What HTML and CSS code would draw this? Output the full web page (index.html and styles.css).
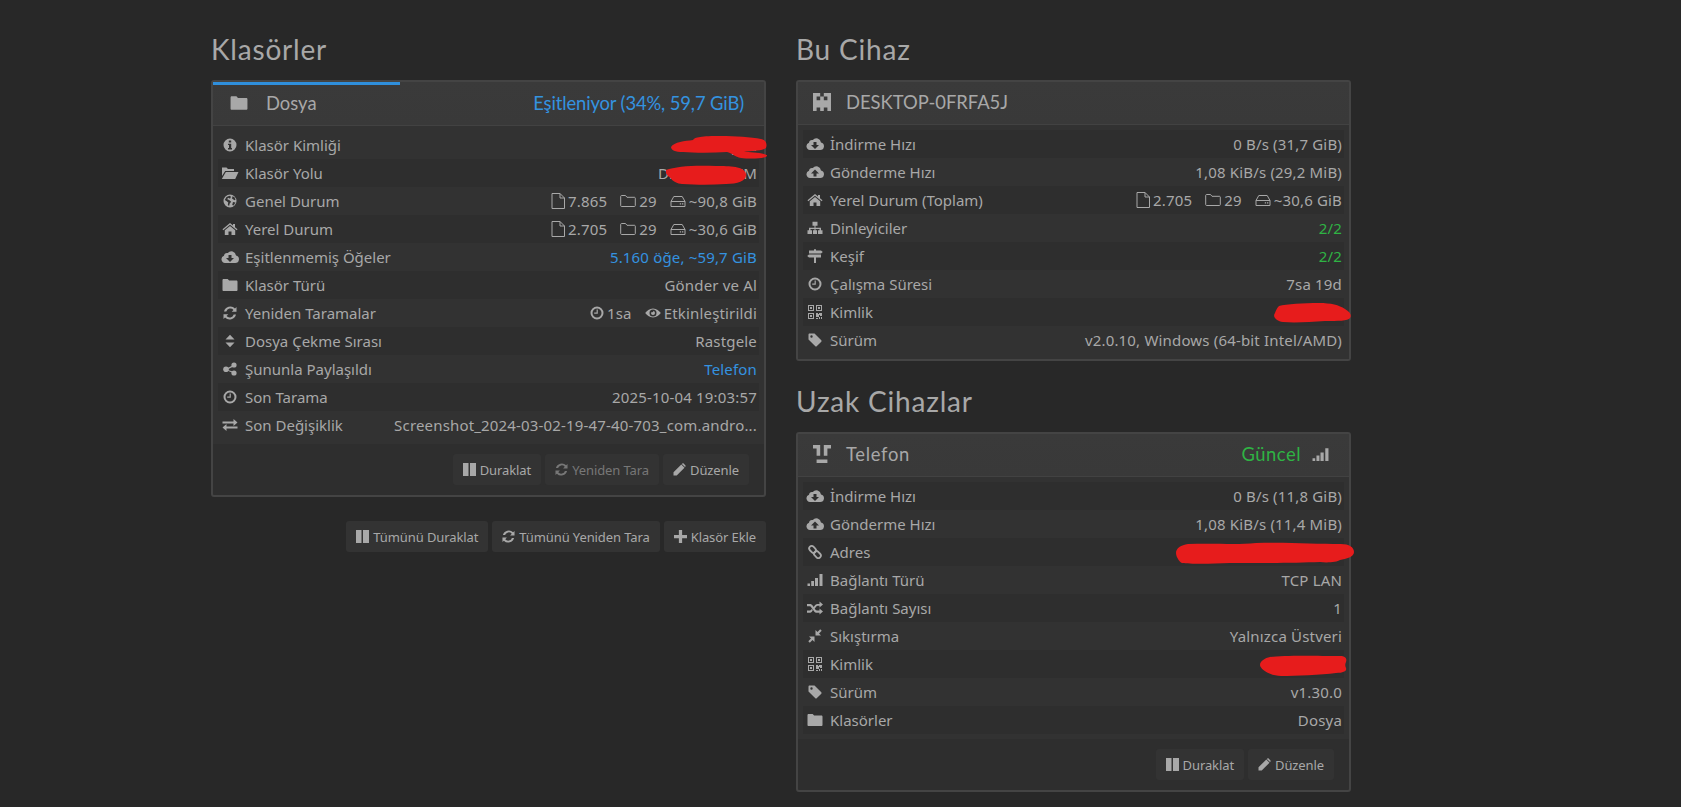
FILE: index.html
```html
<!DOCTYPE html>
<html lang="tr">
<head>
<meta charset="utf-8">
<title>Syncthing</title>
<link rel="stylesheet" href="styles.css">
</head>
<body>
<svg class="defs" width="0" height="0" aria-hidden="true">
  <symbol id="i-folder" viewBox="0 0 16 14"><path d="M1.500 1h4.200l1.400 1.600h7.400c.5 0 1 .5 1 1V12c0 .6-.5 1-1 1h-13c-.5 0-1-.4-1-1V2c0-.5.5-1 1-1z"/></symbol>
  <symbol id="i-open" viewBox="0 0 18 14"><path d="M1 1.500h4.500L7 3h6v2H4.200L1 10z"/><path d="M4.800 6H17.500l-3.300 7H0.800z"/></symbol>
  <symbol id="i-info" viewBox="0 0 14 14"><path fill-rule="evenodd" d="M7 .5a6.500 6.500 0 1 1 0 13 6.500 6.500 0 0 1 0-13zM5.800 2.500v2h2.400v-2zM5 5.700v1.300h1v3H5v1.400h4V10H8.200V5.700z"/></symbol>
  <symbol id="i-globe" viewBox="0 0 14 14"><path fill-rule="evenodd" d="M7 .5a6.500 6.500 0 1 1 0 13 6.500 6.500 0 0 1 0-13zM3.500 3 1.800 6l2 1.200 1.500 1.300-.5 2 1.200 1.700.7-2.700 1.500-1.700-1.700-1.500L4 5l1.500-1.200L7 4.800l1-2-1.500-1zM9.500 2.300 9 4.500l2.500 1.800 1-.5-1-2.500zM10 8l-.8 3 1.500.5 1.800-3z"/></symbol>
  <symbol id="i-home" viewBox="0 0 16 14"><path d="M8 1 .5 7.300l.8 1L8 2.800l6.700 5.500.8-1L13 5.200V2h-2v1.500z"/><path d="M8 4 2.800 8.300V13H6.500V9.500h3V13h3.700V8.300z"/></symbol>
  <symbol id="i-cdown" viewBox="0 0 18 14"><path fill-rule="evenodd" d="M4 13a3.700 3.700 0 0 1-1-7.200A3.300 3.300 0 0 1 6.800 3 4.700 4.700 0 0 1 15 5.500 3.800 3.800 0 0 1 14 13zM7.500 5v3H5l4 4 4-4h-2.500V5z"/></symbol>
  <symbol id="i-cup" viewBox="0 0 18 14"><path fill-rule="evenodd" d="M4 13a3.700 3.700 0 0 1-1-7.200A3.300 3.300 0 0 1 6.800 3 4.700 4.700 0 0 1 15 5.500 3.800 3.800 0 0 1 14 13zM9 4.500l-4 4h2.500v3h3v-3H13z"/></symbol>
  <symbol id="i-refresh" viewBox="0 0 14 14"><path d="M13.500 1v4.800H8.700l1.800-1.800A4.200 4.200 0 0 0 3.300 5.500H1A6.500 6.500 0 0 1 12 2.500z"/><path d="M.5 13V8.200h4.800L3.500 10a4.200 4.200 0 0 0 7.200-1.500H13A6.500 6.500 0 0 1 2 11.500z"/></symbol>
  <symbol id="i-sort" viewBox="0 0 10 14"><path d="M5 .8 9.500 5.500H.5zM5 13.200.5 8.500h9z"/></symbol>
  <symbol id="i-share" viewBox="0 0 14 14"><path d="M2.800 7 10.800 2.800l.6 1.300L4 7.800 11.400 10l-.6 1.300L2.800 8z"/><circle cx="3" cy="7.300" r="2.800"/><circle cx="11" cy="3" r="2.600"/><circle cx="11" cy="11" r="2.600"/></symbol>
  <symbol id="i-clock" viewBox="0 0 14 14"><path fill-rule="evenodd" d="M7 .5a6.500 6.500 0 1 1 0 13 6.500 6.500 0 0 1 0-13zm0 2a4.500 4.500 0 1 0 0 9 4.500 4.500 0 0 0 0-9zM7.800 3.500v4.200H4.200V6.500h2.400v-3z"/></symbol>
  <symbol id="i-exchange" viewBox="0 0 17 14"><path d="M1 3.500h11V1l4 3.500L12 8V5.500H1zM16 8.500H5V6L1 9.500 5 13v-2.500h11z"/></symbol>
  <symbol id="i-file" viewBox="0 0 14 16"><path class="ln" d="M1 .5h8L13.500 5v10.500H1zM9 .5V5h4.500"/></symbol>
  <symbol id="i-folder-o" viewBox="0 0 16 14"><path class="ln" d="M1.500 1.500h4l1.500 1.800h7.500c.4 0 .8.400.8.800v7.600c0 .4-.4.800-.8.800h-13c-.4 0-.8-.4-.8-.8V2.300c0-.4.400-.8.800-.8z"/></symbol>
  <symbol id="i-hdd" viewBox="0 0 16 14"><path class="ln" d="M3.800 2.500h8.400L15 7.500v5H1v-5zM1 7.500h14"/><path d="M9.800 9.300h1.300v1.300H9.800zM12 9.300h1.300v1.300H12z"/></symbol>
  <symbol id="i-eye" viewBox="0 0 16 14"><path fill-rule="evenodd" d="M8 2.500C11.500 2.500 14.300 5 15.800 7 14.300 9 11.500 11.500 8 11.500S1.700 9 .2 7C1.700 5 4.500 2.500 8 2.500zm0 1a3.500 3.500 0 1 0 0 7 3.500 3.500 0 0 0 0-7zM8 5a2 2 0 1 1-2 2c0-.4.100-.7.300-1 .2.400.5.500.9.500.6 0 1-.4 1-.9 0-.3-.1-.5-.2-.6z"/></symbol>
  <symbol id="i-sitemap" viewBox="0 0 17 14"><path d="M6 .8h5v4H9v2h5.500v2.400H16V13h-4.500V9.200H13V8H9v1.200h1.500V13h-4V9.200H8V8H4v1.200h1.500V13H1V9.200h1.500V6.800H8v-2H6z"/></symbol>
  <symbol id="i-signs" viewBox="0 0 16 14"><path d="M7 .3h2v1.200h5l1.800 1.500L14 4.500H2V1.500h5zM2 5.500h12v3H9V14H7V8.500H2L.2 7z"/></symbol>
  <symbol id="i-qr" viewBox="0 0 14 14"><path fill-rule="evenodd" d="M0 0h6v6H0zM1 1v4h4V1zM2 2h2v2H2zM8 0h6v6H8zM9 1v4h4V1zM10 2h2v2h-2zM0 8h6v6H0zM1 9v4h4V9zM2 10h2v2H2zM8 8h2v1h1V8h3v3h-2v-1h-1v2H8zM8 13h2v1H8zM11 12h1v2h-1zM13 12h1v2h-1z"/></symbol>
  <symbol id="i-tag" viewBox="0 0 14 14"><path fill-rule="evenodd" d="M.5 1.500c0-.5.500-1 1-1h5L13.300 7.300c.4.400.4 1 0 1.400l-4.600 4.600c-.4.400-1 .4-1.400 0L.5 6.500zM3.500 2.300a1.200 1.200 0 1 0 0 2.400 1.200 1.200 0 0 0 0-2.400z"/></symbol>
  <symbol id="i-link" viewBox="0 0 14 14"><rect class="lnb" x=".8" y="1.900" width="7.600" height="5" rx="2.500" transform="rotate(45 4.600 4.400)"/><rect class="lnb" x="5.600" y="7.100" width="7.600" height="5" rx="2.500" transform="rotate(45 9.400 9.600)"/></symbol>
  <symbol id="i-signal" viewBox="0 0 16 14"><path d="M.5 10.500h2.500V13H.500zM4.200 8H7v5H4.200zM8 5h3v8H8zM12.500 1h3v12h-3z"/></symbol>
  <symbol id="i-random" viewBox="0 0 17 14"><path d="M13 .5l3.500 3-3.500 3V4.800h-1.800c-.6 0-1 .3-1.400.8L7.800 8.200l-.9-1.900 1.400-1.800c.8-1 1.700-1.500 2.900-1.500H13zM.5 3h2.800c1.300 0 2.300.6 3 1.700L9 8.800c.4.500.9.800 1.500.8H13V7.500l3.500 3-3.500 3v-1.800h-2.500c-1.300 0-2.300-.5-3-1.500L4.800 6.400c-.4-.7-.9-1.100-1.500-1.100H.5zM.5 9.500h2.800c.6 0 1-.2 1.400-.8l.7-1 .9 1.800-.6.800c-.7 1-1.700 1.500-2.900 1.500H.5z"/></symbol>
  <symbol id="i-compress" viewBox="0 0 14 14"><path d="M7.500 1v5.500H13l-2-2 2.700-2.700L12.200.3 9.500 3zM6.500 7.500H1l2 2-2.700 2.700 1.500 1.500L4.500 11l2 2z"/></symbol>
  <symbol id="i-pause" viewBox="0 0 13 13"><path d="M0 0h5.500v13H0zM7 0h6v13H7z"/></symbol>
  <symbol id="i-pencil" viewBox="0 0 13 13"><path d="M.5 9.300 8.300 1.500l3.200 3.200-7.800 7.800H.5zM9.200.7c.5-.5 1.200-.5 1.600 0l1.500 1.500c.5.500.5 1.100 0 1.600l-.3.300L8.800 1z"/></symbol>
  <symbol id="i-plus" viewBox="0 0 12 12"><path d="M4.500 0h3v4.500H12v3H7.500V12h-3V7.500H0v-3h4.500z"/></symbol>
  <symbol id="i-id1" viewBox="0 0 18 18"><path d="M0 0h7.200v3.600H0zM10.800 0H18v3.600h-7.200zM0 3.600h3.600v3.600H0zM7.200 3.600h3.600v3.600H7.200zM14.400 3.600H18v3.600h-3.600zM0 7.200h18v7.200H0zM0 14.400h3.600V18H0zM7.200 14.400h3.600V18H7.200zM14.400 14.400H18V18h-3.600z"/></symbol>
  <symbol id="i-id2" viewBox="0 0 18 18"><path d="M0 0h7.200v3.600H0zM10.800 0H18v3.600h-7.200zM3.600 3.600h3.600v7.200H3.600zM10.800 3.600h3.600v7.200h-3.600zM3.600 14.400h10.800V18H3.600z"/></symbol>
</svg>

<main class="layout">
  <section class="col">
    <h3 class="section-title">Klasörler</h3>
    <article class="panel panel-progress">
      <div class="progress"></div>
      <header class="panel-head">
        <svg class="head-icon head-folder"><use href="#i-folder"/></svg>
        <span class="head-name">Dosya</span>
        <span class="head-status blue">Eşitleniyor (34%, 59,7 GiB)</span>
      </header>
      <div class="panel-body even-stripes">
        <div class="row"><span class="lbl"><svg class="ic"><use href="#i-info"/></svg>Klasör Kimliği</span><span class="val">aaaa-xyaa<svg class="scribble s1" viewBox="0 0 96 23"><path d="M0 11C3 6 14 5 22 4 24 1 30 0 50 0c14 0 30 1 40 3 6 1 6 6 5 9-4 3-14 3-22 4 6 0 24 1 23 4-2 3-18 3-26 2-6-1-9-5-14-6-15 1-32 1-44 0C4 16 0 14 0 11z"/></svg></span></div>
        <div class="row"><span class="lbl"><svg class="ic"><use href="#i-open"/></svg>Klasör Yolu</span><span class="val">D:\Xxxxxx\XM<svg class="scribble s2" viewBox="0 0 82 20"><path d="M0 5C10 1 30 0 50 1c14 0 28 0 30 8 1 7-8 10-20 10-15 1-28 1-44 0C6 18 6 13 2 11 0 9-1 7 0 5z"/></svg></span></div>
        <div class="row"><span class="lbl"><svg class="ic"><use href="#i-globe"/></svg>Genel Durum</span><span class="val stats"><span><svg class="st st-file"><use href="#i-file"/></svg>7.865</span><span><svg class="st"><use href="#i-folder-o"/></svg>29</span><span><svg class="st"><use href="#i-hdd"/></svg>~90,8 GiB</span></span></div>
        <div class="row"><span class="lbl"><svg class="ic"><use href="#i-home"/></svg>Yerel Durum</span><span class="val stats"><span><svg class="st st-file"><use href="#i-file"/></svg>2.705</span><span><svg class="st"><use href="#i-folder-o"/></svg>29</span><span><svg class="st"><use href="#i-hdd"/></svg>~30,6 GiB</span></span></div>
        <div class="row"><span class="lbl"><svg class="ic"><use href="#i-cdown"/></svg>Eşitlenmemiş Öğeler</span><span class="val blue">5.160 öğe, ~59,7 GiB</span></div>
        <div class="row"><span class="lbl"><svg class="ic"><use href="#i-folder"/></svg>Klasör Türü</span><span class="val">Gönder ve Al</span></div>
        <div class="row"><span class="lbl"><svg class="ic"><use href="#i-refresh"/></svg>Yeniden Taramalar</span><span class="val stats"><span><svg class="st st-sm"><use href="#i-clock"/></svg>1sa</span><span><svg class="st"><use href="#i-eye"/></svg>Etkinleştirildi</span></span></div>
        <div class="row"><span class="lbl"><svg class="ic"><use href="#i-sort"/></svg>Dosya Çekme Sırası</span><span class="val">Rastgele</span></div>
        <div class="row"><span class="lbl"><svg class="ic"><use href="#i-share"/></svg>Şununla Paylaşıldı</span><span class="val blue">Telefon</span></div>
        <div class="row"><span class="lbl"><svg class="ic"><use href="#i-clock"/></svg>Son Tarama</span><span class="val">2025-10-04 19:03:57</span></div>
        <div class="row"><span class="lbl"><svg class="ic"><use href="#i-exchange"/></svg>Son Değişiklik</span><span class="val">Screenshot_2024-03-02-19-47-40-703_com.andro...</span></div>
      </div>
      <footer class="panel-foot">
        <span class="btn"><svg class="bi"><use href="#i-pause"/></svg>Duraklat</span>
        <span class="btn btn-off"><svg class="bi"><use href="#i-refresh"/></svg>Yeniden Tara</span>
        <span class="btn"><svg class="bi"><use href="#i-pencil"/></svg>Düzenle</span>
      </footer>
    </article>
    <div class="global-actions">
      <span class="btn"><svg class="bi"><use href="#i-pause"/></svg>Tümünü Duraklat</span>
      <span class="btn"><svg class="bi"><use href="#i-refresh"/></svg>Tümünü Yeniden Tara</span>
      <span class="btn"><svg class="bi"><use href="#i-plus"/></svg>Klasör Ekle</span>
    </div>
  </section>

  <section class="col">
    <h3 class="section-title">Bu Cihaz</h3>
    <article class="panel">
      <header class="panel-head">
        <svg class="head-icon"><use href="#i-id1"/></svg>
        <span class="head-name">DESKTOP-0FRFA5J</span>
      </header>
      <div class="panel-body odd-stripes">
        <div class="row"><span class="lbl"><svg class="ic"><use href="#i-cdown"/></svg>İndirme Hızı</span><span class="val">0 B/s (31,7 GiB)</span></div>
        <div class="row"><span class="lbl"><svg class="ic"><use href="#i-cup"/></svg>Gönderme Hızı</span><span class="val">1,08 KiB/s (29,2 MiB)</span></div>
        <div class="row"><span class="lbl"><svg class="ic"><use href="#i-home"/></svg>Yerel Durum (Toplam)</span><span class="val stats"><span><svg class="st st-file"><use href="#i-file"/></svg>2.705</span><span><svg class="st"><use href="#i-folder-o"/></svg>29</span><span><svg class="st"><use href="#i-hdd"/></svg>~30,6 GiB</span></span></div>
        <div class="row"><span class="lbl"><svg class="ic"><use href="#i-sitemap"/></svg>Dinleyiciler</span><span class="val green">2/2</span></div>
        <div class="row"><span class="lbl"><svg class="ic"><use href="#i-signs"/></svg>Keşif</span><span class="val green">2/2</span></div>
        <div class="row"><span class="lbl"><svg class="ic"><use href="#i-clock"/></svg>Çalışma Süresi</span><span class="val">7sa 19d</span></div>
        <div class="row"><span class="lbl"><svg class="ic ic-qr"><use href="#i-qr"/></svg>Kimlik</span><span class="val"><svg class="scribble s3" viewBox="0 0 77 20"><path d="M5 3C12 1 30 0 45 0c12 0 20 2 26 6 5 3 7 6 5 9-2 3-12 3-25 3-15 1-30 2-42 1C3 18-2 14 1 10c1-3 2-5 4-7z"/></svg></span></div>
        <div class="row"><span class="lbl"><svg class="ic"><use href="#i-tag"/></svg>Sürüm</span><span class="val">v2.0.10, Windows (64-bit Intel/AMD)</span></div>
      </div>
    </article>

    <h3 class="section-title section-next">Uzak Cihazlar</h3>
    <article class="panel">
      <header class="panel-head">
        <svg class="head-icon"><use href="#i-id2"/></svg>
        <span class="head-name head-name-wide">Telefon</span>
        <span class="head-status green">Güncel<svg class="head-signal"><use href="#i-signal"/></svg></span>
      </header>
      <div class="panel-body odd-stripes">
        <div class="row"><span class="lbl"><svg class="ic"><use href="#i-cdown"/></svg>İndirme Hızı</span><span class="val">0 B/s (11,8 GiB)</span></div>
        <div class="row"><span class="lbl"><svg class="ic"><use href="#i-cup"/></svg>Gönderme Hızı</span><span class="val">1,08 KiB/s (11,4 MiB)</span></div>
        <div class="row"><span class="lbl"><svg class="ic"><use href="#i-link"/></svg>Adres</span><span class="val"><svg class="scribble s4" viewBox="0 0 178 23"><path d="M12 3C40 2 60 4 80 2c30-1 60 1 85 1 8 0 13 3 13 8 0 5-8 7-14 8-3 2-12 3-20 2-25 1-60 1-90 1-20 1-40 1-48 0C5 22 0 17 0 12 0 7 5 4 12 3z"/></svg></span></div>
        <div class="row"><span class="lbl"><svg class="ic"><use href="#i-signal"/></svg>Bağlantı Türü</span><span class="val">TCP LAN</span></div>
        <div class="row"><span class="lbl"><svg class="ic"><use href="#i-random"/></svg>Bağlantı Sayısı</span><span class="val">1</span></div>
        <div class="row"><span class="lbl"><svg class="ic"><use href="#i-compress"/></svg>Sıkıştırma</span><span class="val">Yalnızca Üstveri</span></div>
        <div class="row"><span class="lbl"><svg class="ic ic-qr"><use href="#i-qr"/></svg>Kimlik</span><span class="val"><svg class="scribble s5" viewBox="0 0 87 22"><path d="M10 2C25 0 60 1 80 1c6 0 7 3 6 6-1 2-1 4 0 6 1 3-2 5-10 5-15 2-40 3-55 3C10 21 0 14 0 10 0 6 5 3 10 2z"/></svg></span></div>
        <div class="row"><span class="lbl"><svg class="ic"><use href="#i-tag"/></svg>Sürüm</span><span class="val">v1.30.0</span></div>
        <div class="row"><span class="lbl"><svg class="ic"><use href="#i-folder"/></svg>Klasörler</span><span class="val">Dosya</span></div>
      </div>
      <footer class="panel-foot">
        <span class="btn"><svg class="bi"><use href="#i-pause"/></svg>Duraklat</span>
        <span class="btn"><svg class="bi"><use href="#i-pencil"/></svg>Düzenle</span>
      </footer>
    </article>
  </section>
</main>
</body>
</html>
```

FILE: styles.css
```css
* { box-sizing: border-box; }
html, body { margin: 0; height: 807px; overflow: hidden; }
body {
  background: #282828;
  color: #a8a8a8;
  font-family: "Noto Sans", "Open Sans", sans-serif;
  font-size: 15px;
  line-height: 20px;
}
.defs { position: absolute; }
svg { fill: currentColor; }
.ln { fill: none; stroke: currentColor; stroke-width: 1; }
.lnb { fill: none; stroke: currentColor; stroke-width: 1.8; }

.layout {
  display: grid;
  grid-template-columns: 555px 555px;
  column-gap: 30px;
  padding: 36px 0 0 211px;
}
.section-title {
  margin: 0 0 18px;
  font-family: Lato, sans-serif;
  font-size: 28px;
  font-weight: 400;
  letter-spacing: .8px;
  line-height: 26px;
  color: #a8a8a8;
}
.section-next { margin-top: 27px; }

.panel {
  position: relative;
  background: #2e2e2e;
  border: 2px solid #444;
  border-radius: 3px;
}
.panel-progress .panel-head { height: 44px; }
.progress {
  position: absolute;
  left: 0;
  top: 0;
  width: 187px;
  height: 3px;
  background: #2f8fdc;
  z-index: 1;
}
.panel-head {
  display: flex;
  align-items: center;
  height: 43px;
  padding: 0 20px 2px 15px;
  background: linear-gradient(#3a3a3a, #393939);
  border-bottom: 1px solid #424242;
  font-family: Lato, sans-serif;
  font-size: 18.4px;
}
.head-icon { width: 18px; height: 18px; flex: none; margin-right: 15px; }
.head-folder { margin: 0 18px 0 2px; width: 18px; height: 16px; }
.head-name { flex: 1; }
.head-name-wide { letter-spacing: .7px; }
.head-status { display: inline-flex; align-items: center; }
.head-status.blue { letter-spacing: -.12px; }
.head-status.green { letter-spacing: .5px; }
.head-signal { width: 17px; height: 15px; margin-left: 11px; color: #a8a8a8; }

.panel-body { padding: 5px; background: #323232; }
.row {
  display: flex;
  justify-content: space-between;
  align-items: center;
  height: 28px;
  padding: 0 2px 0 3px;
  white-space: nowrap;
}
.even-stripes .row:nth-child(even), .odd-stripes .row:nth-child(odd) { background: #2e2e2e; }
.lbl { display: flex; align-items: center; }
.ic { width: 18px; height: 14px; flex: none; margin-right: 6px; }
.ic-qr { width: 14px; margin: 0 8px 0 2px; }
.val { position: relative; min-height: 20px; letter-spacing: .17px; }
.stats { display: flex; gap: 13px; }
.stats > span { display: inline-flex; align-items: center; }
.st { width: 16px; height: 14px; margin-right: 3px; }
.st-file { width: 14px; height: 16px; }
.st-sm { width: 14px; height: 14px; }

.blue { color: #3493e0; }
.green { color: #2fb344; }

.scribble { position: absolute; fill: #e71c1c; color: #e71c1c; }
.s1 { width: 96px; height: 23px; right: -10px; top: 1px; }
.s2 { width: 82px; height: 20px; right: 9px; top: 2px; }
.s3 { width: 77px; height: 20px; right: -9px; top: 1px; }
.s4 { width: 178px; height: 23px; right: -12px; top: -1px; }
.s5 { width: 87px; height: 22px; right: -5px; top: 1px; }

.panel-foot {
  display: flex;
  justify-content: flex-end;
  gap: 4px;
  padding: 10px 15px;
}
.btn {
  display: inline-flex;
  align-items: center;
  height: 31px;
  padding: 0 10px;
  background: #333;
  border-radius: 3px;
  font-size: 13px;
  letter-spacing: -.1px;
  color: #a8a8a8;
  white-space: nowrap;
}
.btn-off { color: #777; }
.bi { width: 13px; height: 13px; flex: none; margin-right: 4px; }
.global-actions {
  display: flex;
  justify-content: flex-end;
  gap: 4px;
  margin-top: 24px;
}
```
